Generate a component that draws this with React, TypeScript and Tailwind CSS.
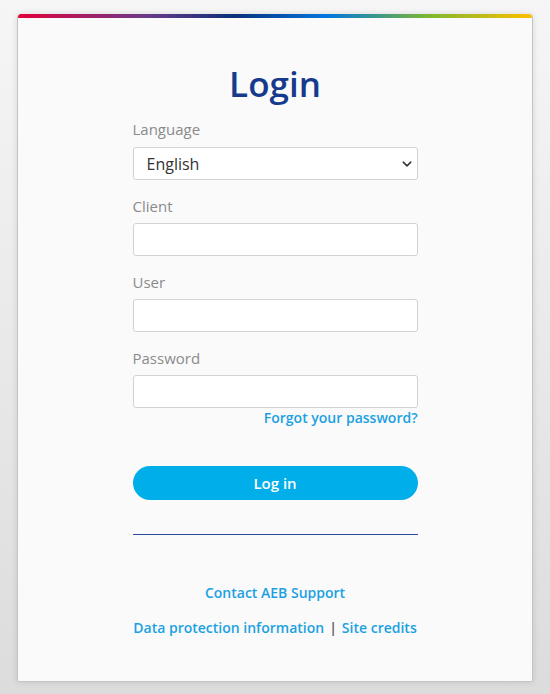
import React, { useState } from 'react'

const Field = ({ label, type = 'text' }: { label: string; type?: string }) => (
  <div className="flex flex-col">
    <label className="text-[15px] leading-5 text-[#8a8a8a]">{label}</label>
    <input
      type={type}
      className="mt-[7px] h-[33px] w-full rounded-[3px] border border-[#cfd2d6] bg-white px-3 text-[16px] text-[#333] outline-none"
    />
  </div>
)

export default function App() {
  const [lang, setLang] = useState('en')

  return (
    <div
      className="min-h-[694px] w-full bg-gradient-to-b from-[#f6f6f6] to-[#dcdcdc] px-[17px] pt-[14px]"
      style={{ fontFamily: '"Open Sans", "Noto Sans", sans-serif' }}
    >
      <div className="h-[668px] overflow-hidden rounded-t-[4px] rounded-b-[2px] border-x border-b border-[#c4c4c4] bg-[#fafafa] shadow-[0_0_6px_rgba(0,0,0,0.12)]">
        <div className="h-[4px] bg-[linear-gradient(90deg,#e4003a_0%,#6b3a8a_25%,#0b2f7a_42%,#0077e0_60%,#7cb82f_80%,#ffbf00_100%)]" />

        <div className="mx-auto flex w-[285px] flex-col pt-[44px]">
          <h1 className="text-center text-[35px] font-semibold leading-[44px] text-[#163a8c]">Login</h1>

          <div className="mt-[13px] flex flex-col">
            <label className="text-[15px] leading-5 text-[#8a8a8a]">Language</label>
            <div className="relative mt-[8px]">
              <select
                value={lang}
                onChange={e => setLang(e.target.value)}
                className="h-[33px] w-full appearance-none rounded-[3px] border border-[#cfd2d6] bg-white pl-[13px] text-[16px] text-[#333] outline-none"
              >
                <option value="en">English</option>
                <option value="de">Deutsch</option>
              </select>
              <svg
                viewBox="0 0 16 16"
                className="pointer-events-none absolute right-[6px] top-[12px] h-[10px] w-[10px]"
              >
                <path d="M2 5l6 6 6-6" fill="none" stroke="#333" strokeWidth="2.4" strokeLinecap="round" strokeLinejoin="round" />
              </svg>
            </div>
          </div>

          <div className="mt-[16px] flex flex-col gap-[16px]">
            <Field label="Client" />
            <Field label="User" />
            <Field label="Password" type="password" />
          </div>

          <a href="#" className="self-end text-[14px] font-semibold leading-5 text-[#1ba1e2]">
            Forgot your password?
          </a>

          <button className="mt-[38px] h-[34px] w-full rounded-full bg-[#00aeea] text-[15px] font-semibold text-white">
            Log in
          </button>

          <div className="mt-[34px] h-px bg-[#2a4aa0]" />

          <a href="#" className="mt-[48px] text-center text-[14px] font-semibold leading-5 text-[#1ba1e2]">
            Contact AEB Support
          </a>

          <div className="mt-[15px] whitespace-nowrap text-center text-[14px] font-semibold leading-5 text-[#1ba1e2]">
            <a href="#">Data protection information</a>
            <span className="mx-[5px] text-[#555]">|</span>
            <a href="#">Site credits</a>
          </div>
        </div>
      </div>
    </div>
  )
}
